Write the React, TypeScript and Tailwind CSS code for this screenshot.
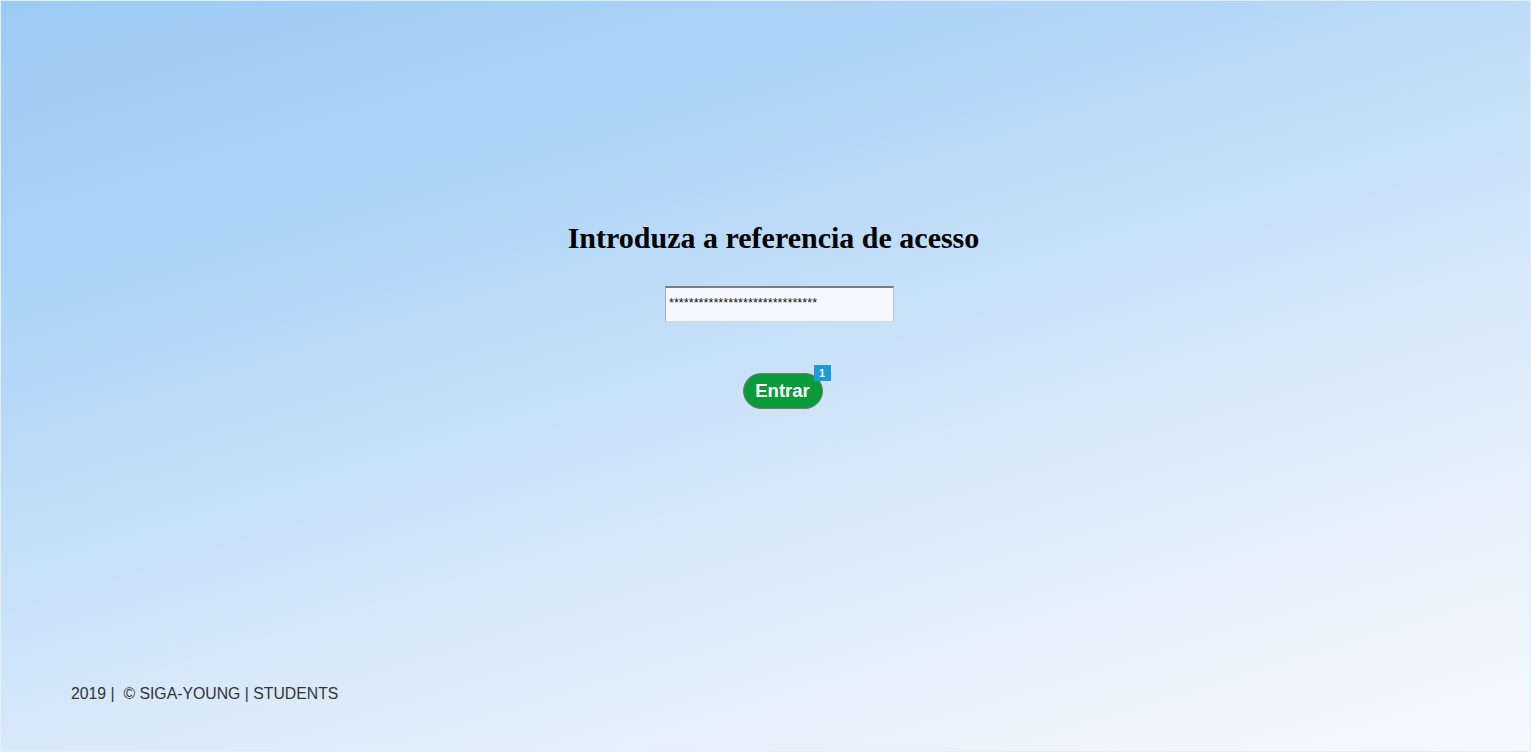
export default function App() {
  return (
    <div className="relative flex flex-col h-[752px] w-full overflow-hidden border border-[#e3eefa] bg-[linear-gradient(163deg,#9bcaf3_0%,#b2d6f7_30%,#d8e9fa_62%,#f6f9fe_100%)]">
      <main className="flex flex-col items-center pt-[219px]">
        <h1 className="ml-[16px] text-[30px] leading-[36px] font-bold text-black font-['Liberation_Serif',serif]">
          Introduza a referencia de acesso
        </h1>
        <div className="ml-[28px] mt-[30px] w-[229px] h-[36px] bg-[#f4f7fc] border-t-2 border-t-[#7a7d80] border-l border-l-[#a9acb0] border-r border-r-[#c0c3c6] border-b border-b-[#d4d6d8] flex items-center pl-[3px] pb-[2px]">
          <span className="text-[12.7px] text-[#111] font-['Liberation_Sans',sans-serif]">
            ******************************
          </span>
        </div>
        <div className="relative ml-[34px] mt-[51px]">
          <button className="h-[36px] w-[80px] rounded-full bg-[#0a9b3b] border border-[#6e7a72] text-white text-[18.5px] font-bold font-['Liberation_Sans',sans-serif] flex items-center justify-center">
            Entrar
          </button>
          <span className="absolute -top-[8px] -right-[8px] w-[17px] h-[16px] bg-[#1c9bd8] text-white text-[10px] font-bold font-['Liberation_Sans',sans-serif] flex items-center justify-center">
            1
          </span>
        </div>
      </main>
      <footer className="mt-auto mb-[45px] pl-[70px] text-[15.8px] text-[#333] font-['Liberation_Sans',sans-serif]">
        2019 |&nbsp; © SIGA-YOUNG | STUDENTS
      </footer>
    </div>
  );
}
